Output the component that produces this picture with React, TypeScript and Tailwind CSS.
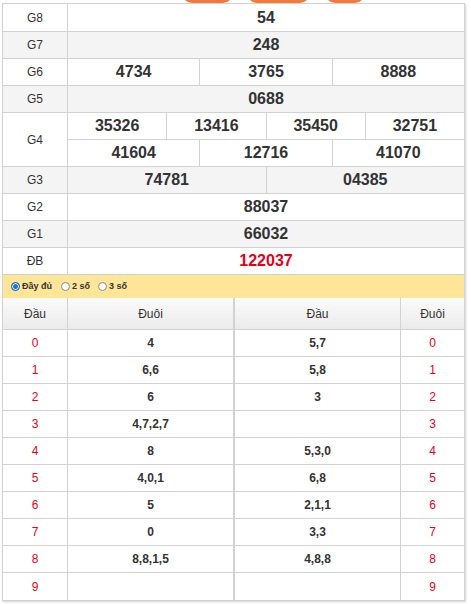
import React from "react";

const B = "border-[#d2d2d2]";

function Label({ children }: { children: React.ReactNode }) {
  return (
    <div className={`w-[65px] shrink-0 border-r ${B} flex items-center justify-center text-[12px] text-[#333]`}>
      {children}
    </div>
  );
}

function Nums({ values, red }: { values: string[]; red?: boolean }) {
  return (
    <div className="flex flex-1">
      {values.map((v, i) => (
        <div
          key={i}
          className={`flex-1 flex items-center justify-center text-[16px] font-bold ${
            red ? "text-[#e3001b]" : "text-[#333]"
          } ${i < values.length - 1 ? `border-r ${B}` : ""}`}
        >
          {v}
        </div>
      ))}
    </div>
  );
}

function PRow({
  label,
  values,
  gray,
  red,
  h = "h-[27px]",
}: {
  label: string;
  values: string[];
  gray?: boolean;
  red?: boolean;
  h?: string;
}) {
  return (
    <div className={`flex ${h} border-b ${B} ${gray ? "bg-[#f4f4f4]" : "bg-white"}`}>
      <Label>{label}</Label>
      <Nums values={values} red={red} />
    </div>
  );
}

const loto: [string, string, string, string][] = [
  ["0", "4", "5,7", "0"],
  ["1", "6,6", "5,8", "1"],
  ["2", "6", "3", "2"],
  ["3", "4,7,2,7", "", "3"],
  ["4", "8", "5,3,0", "4"],
  ["5", "4,0,1", "6,8", "5"],
  ["6", "5", "2,1,1", "6"],
  ["7", "0", "3,3", "7"],
  ["8", "8,8,1,5", "4,8,8", "8"],
  ["9", "", "", "9"],
];

function Radio({ checked }: { checked?: boolean }) {
  return checked ? (
    <span className="w-[9px] h-[9px] rounded-full bg-[#1a73e8] border border-[#1565c0] shadow-[inset_0_0_0_1px_#ffffff] inline-block" />
  ) : (
    <span className="w-[9px] h-[9px] rounded-full bg-white border border-[#8a8a8a] inline-block" />
  );
}

export default function App() {
  return (
    <div className="w-[471px] h-[604px] bg-white overflow-hidden" style={{ fontFamily: '"Liberation Sans", Arial, sans-serif' }}>
      {/* cut-off orange buttons */}
      <div className="flex items-end h-[3px] overflow-hidden">
        <div className="ml-[182px] w-[51px] h-[20px] rounded-full bg-[#f47a3b]" />
        <div className="ml-[14px] w-[63px] h-[20px] rounded-full bg-[#f47a3b]" />
        <div className="ml-[15px] w-[40px] h-[20px] rounded-full bg-[#f47a3b]" />
      </div>
      <div className={`ml-[2px] w-[463px] border ${B} shadow-[1px_1px_2px_rgba(0,0,0,0.18)]`}>
        <PRow label="G8" values={["54"]} h="h-[28px]" />
        <PRow label="G7" values={["248"]} gray />
        <PRow label="G6" values={["4734", "3765", "8888"]} />
        <PRow label="G5" values={["0688"]} gray />
        <div className={`flex h-[54px] border-b ${B} bg-white`}>
          <Label>G4</Label>
          <div className="flex flex-col flex-1">
            <div className={`flex h-[27px] border-b ${B}`}>
              <Nums values={["35326", "13416", "35450", "32751"]} />
            </div>
            <div className="flex h-[26px]">
              <Nums values={["41604", "12716", "41070"]} />
            </div>
          </div>
        </div>
        <PRow label="G3" values={["74781", "04385"]} gray />
        <PRow label="G2" values={["88037"]} />
        <PRow label="G1" values={["66032"]} gray />
        <PRow label="ĐB" values={["122037"]} red />

        {/* radio bar */}
        <div className="flex items-center h-[23px] bg-[#fee597] pl-[8px] text-[9px] font-bold text-[#333]">
          <Radio checked />
          <span className="ml-[2px]">Đầy đủ</span>
          <span className="ml-[9px] flex items-center">
            <Radio />
          </span>
          <span className="ml-[2px]">2 số</span>
          <span className="ml-[8px] flex items-center">
            <Radio />
          </span>
          <span className="ml-[2px]">3 số</span>
        </div>

        {/* loto header */}
        <div className={`flex h-[32px] border-b ${B} bg-linear-to-b from-[#fbfbfb] to-[#ebebeb] text-[12px] text-[#333]`}>
          <div className={`flex w-[232px] border-r-2 ${B}`}>
            <div className={`w-[65px] border-r ${B} flex items-center justify-center`}>Đầu</div>
            <div className="flex-1 flex items-center justify-center">Đuôi</div>
          </div>
          <div className="flex flex-1">
            <div className={`w-[166px] border-r ${B} flex items-center justify-center`}>Đầu</div>
            <div className="flex-1 flex items-center justify-center">Đuôi</div>
          </div>
        </div>

        {loto.map((r, i) => (
          <div key={i} className={`flex h-[27px] ${i < loto.length - 1 ? `border-b ${B}` : ""} bg-white text-[12px]`}>
            <div className={`flex w-[232px] border-r-2 ${B}`}>
              <div className={`w-[65px] border-r ${B} flex items-center justify-center text-[#e3001b]`}>{r[0]}</div>
              <div className="flex-1 flex items-center justify-center font-bold text-[#333]">{r[1]}</div>
            </div>
            <div className="flex flex-1">
              <div className={`w-[166px] border-r ${B} flex items-center justify-center font-bold text-[#333]`}>{r[2]}</div>
              <div className="flex-1 flex items-center justify-center text-[#e3001b]">{r[3]}</div>
            </div>
          </div>
        ))}
      </div>
    </div>
  );
}
